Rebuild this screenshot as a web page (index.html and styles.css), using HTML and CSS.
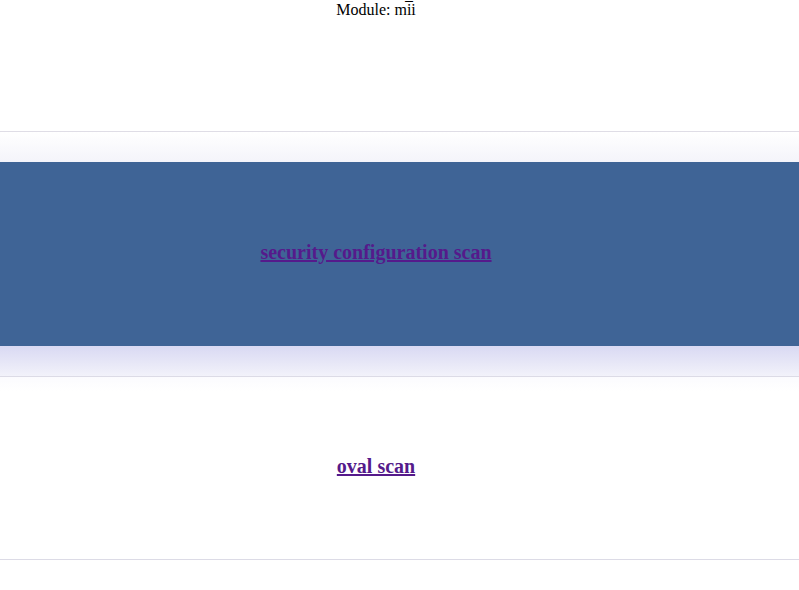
FILE: index.html
```html
<!DOCTYPE html>
<html>
<head>
<meta charset="utf-8">
<link rel="stylesheet" href="styles.css">
</head>
<body>
<div class="header"><div class="module">Module: mi&#x0305;i</div></div>
<div class="row row-active"><a class="band" href="#sc"><span class="link visited">security configuration scan</span></a></div>
<div class="row row-plain"><span class="link visited">oval scan</span></div>
</body>
</html>
```
FILE: styles.css
```css
html, body {
  margin: 0;
  padding: 0;
  background: #ffffff;
}
body {
  font-family: "Liberation Serif", "Times New Roman", serif;
  font-size: 16px;
  color: #000;
}
.header {
  height: 131px;
  border-bottom: 1px solid #dfdde6;
}
.module {
  text-align: center;
  padding-right: 47px;
  line-height: 19px;
}
.row {
  border-bottom: 1px solid #dcdbe6;
}
.row-active {
  padding: 30px 0;
  background:
    linear-gradient(to bottom, #ffffff, #f4f4fa) top / 100% 30px no-repeat,
    linear-gradient(to bottom, #d9d9f3, #f2f2fa) bottom / 100% 30px no-repeat;
}
.band {
  display: flex;
  align-items: center;
  justify-content: center;
  height: 184px;
  padding-right: 47px;
  padding-bottom: 4px;
  box-sizing: border-box;
  background: #3f6496;
  text-decoration: none;
}
.row-plain {
  display: flex;
  align-items: center;
  justify-content: center;
  padding-right: 47px;
  padding-bottom: 4px;
  box-sizing: border-box;
  height: 183px;
  background: linear-gradient(to bottom, #fbfbfe, #ffffff 14px);
}
.link {
  font-size: 20px;
  font-weight: bold;
  text-decoration: underline;
}
.visited {
  color: #551a8b;
}
```
